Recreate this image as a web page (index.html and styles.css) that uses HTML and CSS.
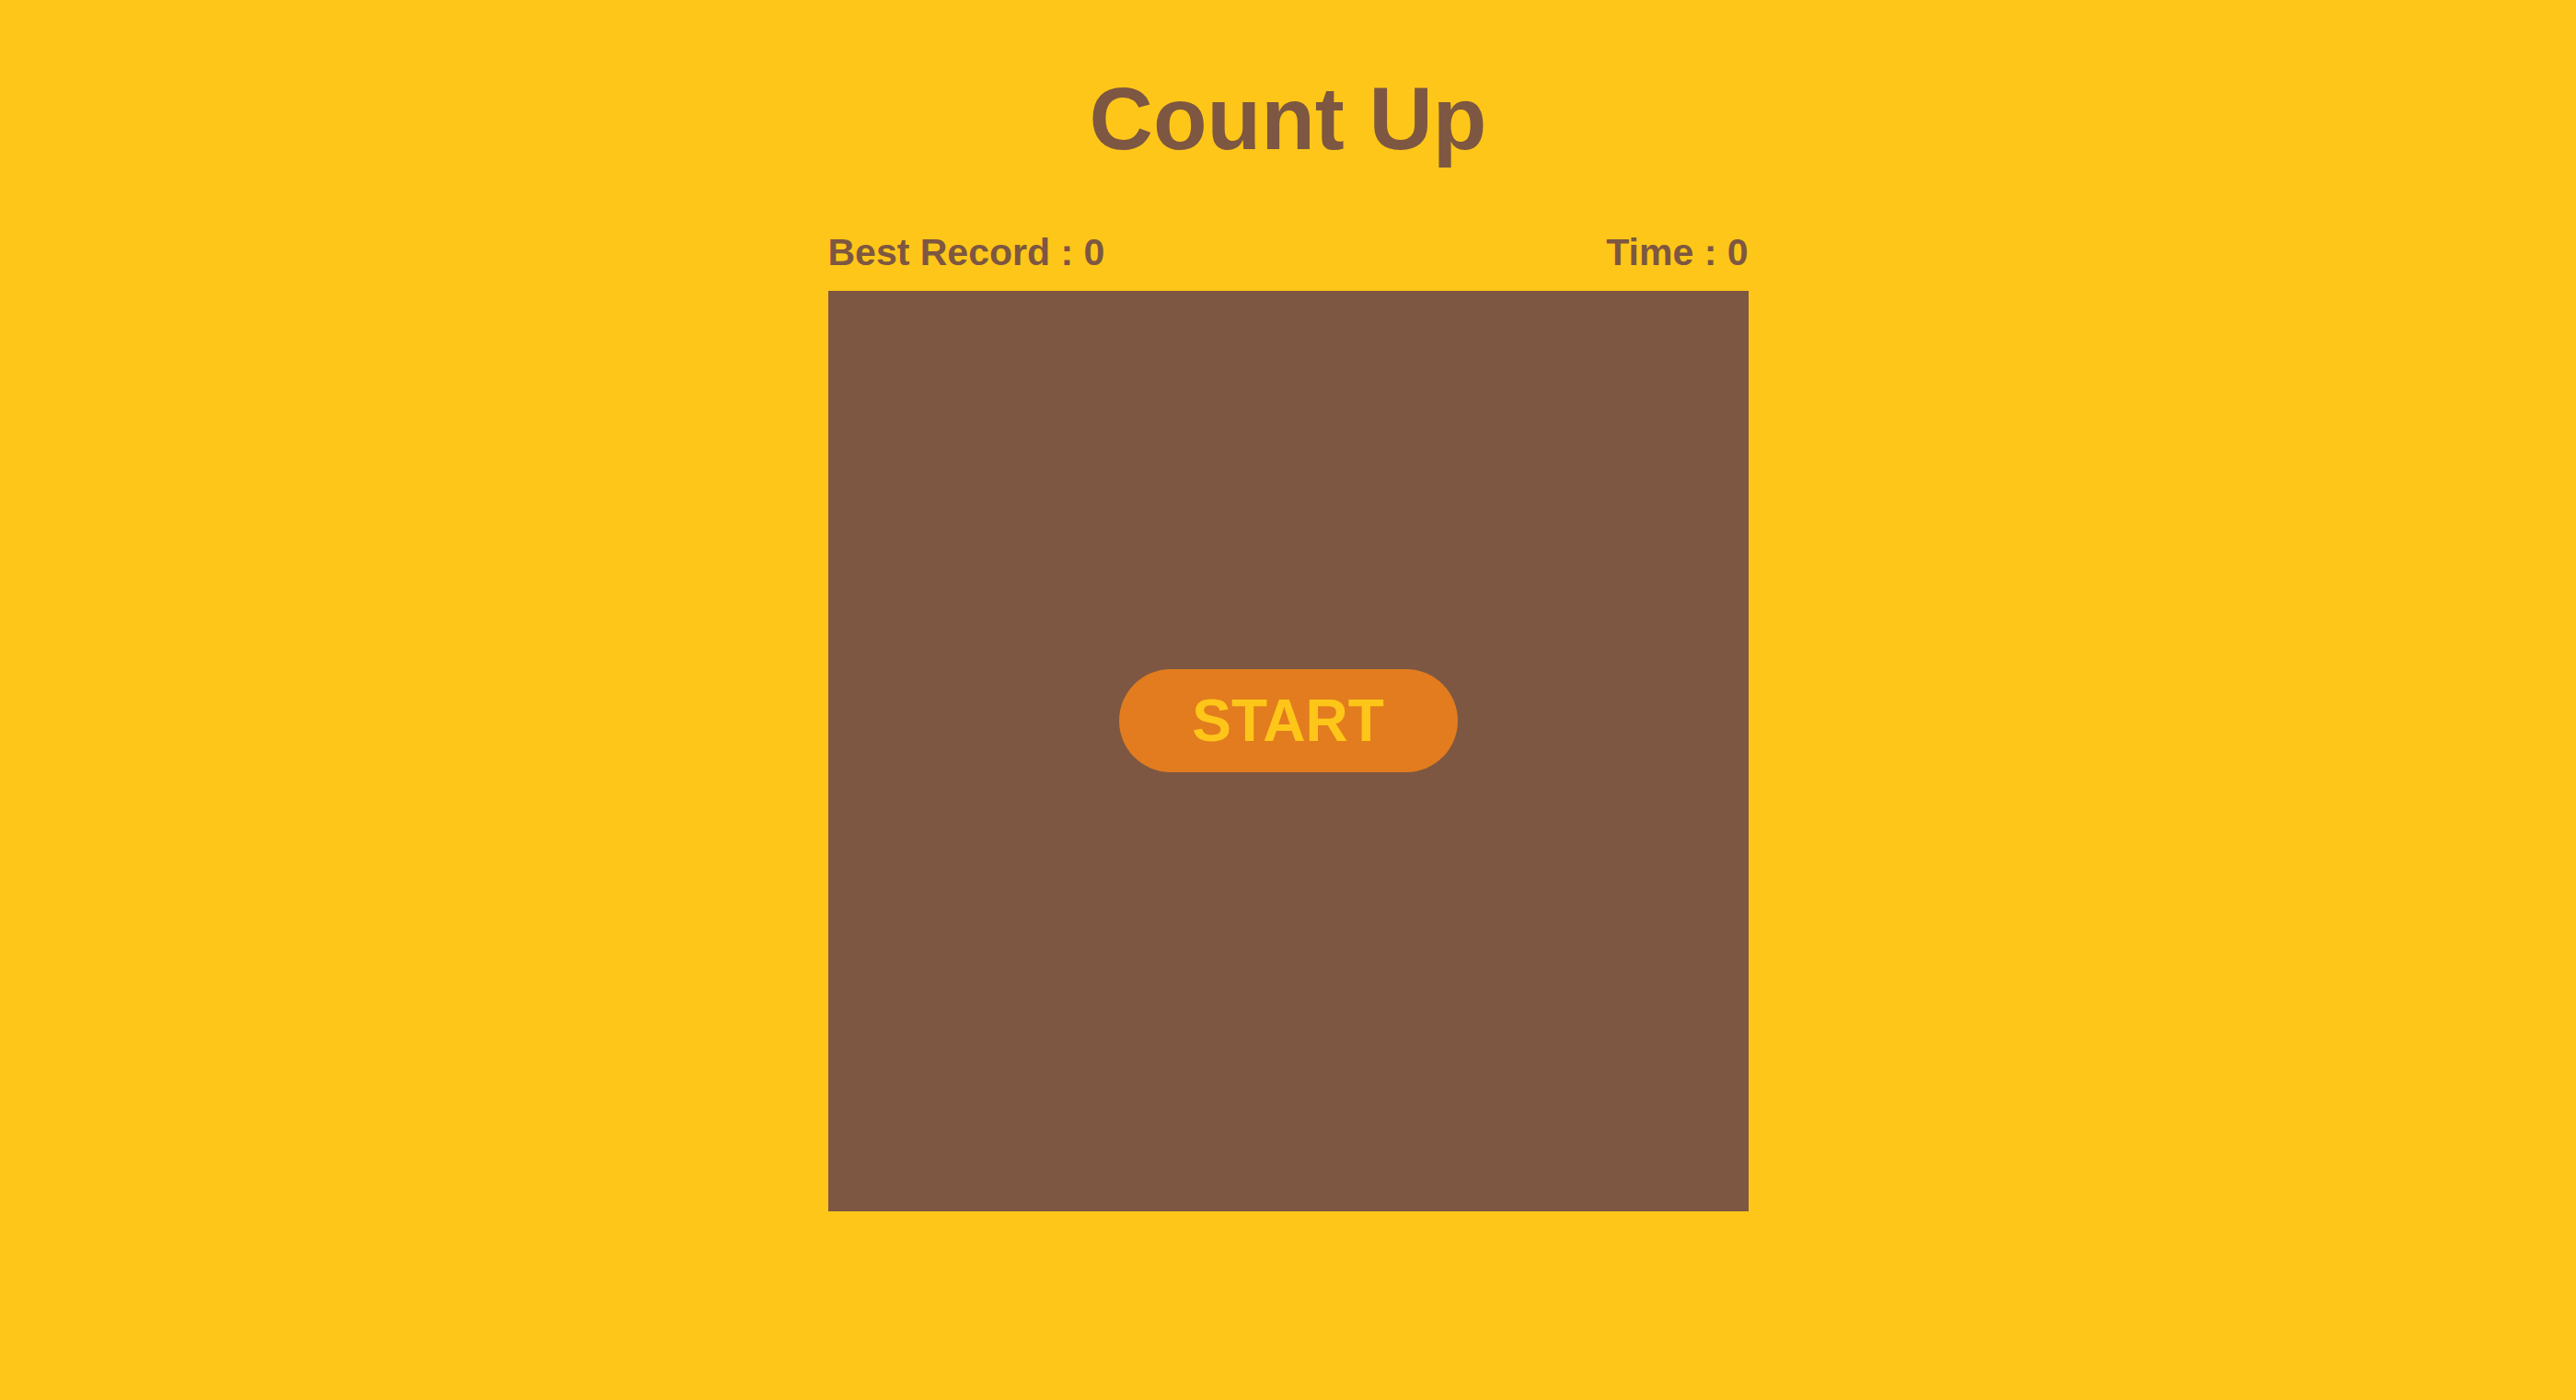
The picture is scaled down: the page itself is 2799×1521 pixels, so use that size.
FILE: index.html
```html
<!DOCTYPE html>
<html>
<head>
<meta charset="utf-8">
<title>Count Up</title>
<link rel="stylesheet" href="styles.css">
</head>
<body>
<h1 class="title">Count Up</h1>
<main class="game">
  <div class="stats">
    <span class="stat">Best Record : 0</span>
    <span class="stat">Time : 0</span>
  </div>
  <div class="board">
    <button class="start">START</button>
  </div>
</main>
</body>
</html>
```
FILE: styles.css
```css
html, body {
  margin: 0;
  padding: 0;
}
body {
  background: #fec619;
  color: #7d5741;
  font-family: "Liberation Sans", Arial, sans-serif;
  font-weight: bold;
  min-height: 100vh;
}
.title {
  margin: 0;
  padding-top: 81px;
  font-size: 96px;
  line-height: 96px;
  text-align: center;
}
.game {
  width: 1000px;
  margin: 77px auto 0;
}
.stats {
  display: flex;
  justify-content: space-between;
  font-size: 41px;
  line-height: 41px;
}
.board {
  margin-top: 21px;
  height: 1000px;
  background: #7d5741;
  display: flex;
  align-items: center;
  justify-content: center;
  padding-bottom: 66px;
  box-sizing: border-box;
}
.start {
  width: 368px;
  height: 112px;
  border: none;
  border-radius: 56px;
  background: #e27c1e;
  color: #fec619;
  font-family: "Liberation Sans", Arial, sans-serif;
  font-weight: bold;
  font-size: 64px;
  padding: 0;
  cursor: pointer;
}
```
